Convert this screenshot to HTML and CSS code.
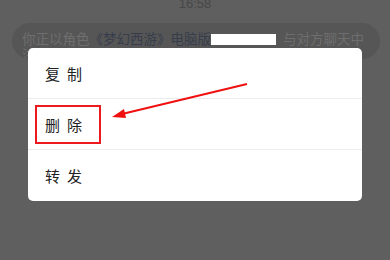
FILE: index.html
```html
<!DOCTYPE html>
<html lang="zh">
<head>
<meta charset="utf-8">
<link rel="stylesheet" href="styles.css">
</head>
<body>
<div class="screen">
  <div class="time">16:58</div>
  <div class="bubble">
    <span class="muted">你正以角色</span><span class="link">《梦幻西游》电脑版</span><span class="mask"></span><span class="muted">与对方聊天中</span><br>
    <span class="muted">注意保护个人隐私</span>
  </div>

  <div class="menu">
    <div class="item">复制</div>
    <div class="item">删除</div>
    <div class="item last">转发</div>
  </div>

  <div class="highlight"></div>
  <svg class="arrow" width="390" height="260" viewBox="0 0 390 260">
    <line x1="247" y1="84" x2="122" y2="114" stroke="#f01010" stroke-width="2"/>
    <polygon points="112,117 124,109 126,118" fill="#f01010"/>
  </svg>
</div>
</body>
</html>
```

FILE: styles.css
```css
* { box-sizing: border-box; }
html, body { margin: 0; padding: 0; }
body {
  background: #5f5f5f;
  font-family: "Noto Sans CJK SC", "Noto Sans", sans-serif;
  width: 390px;
  height: 260px;
  overflow: hidden;
}
.screen {
  position: relative;
  width: 390px;
  height: 260px;
  display: flex;
  flex-direction: column;
  align-items: flex-start;
}
.time {
  align-self: center;
  font-family: "Liberation Sans", Arial, sans-serif;
  font-size: 13px;
  line-height: 13px;
  margin-top: -3px;
  color: #474747;
}
.bubble {
  margin: 13px 0 0 12px;
  width: 368px;
  height: 36px;
  border-radius: 18px;
  background: #565656;
  padding: 7px 0 0 10px;
  font-size: 13.5px;
  line-height: 16px;
  white-space: nowrap;
  overflow: hidden;
}
.muted { color: #6e6e6e; }
.link { color: #363d4c; }
.mask {
  display: inline-block;
  width: 65px;
  height: 11px;
  margin-right: 7px;
  background: #ffffff;
  vertical-align: -1px;
}
.menu {
  position: absolute;
  left: 28px;
  top: 48px;
  width: 334px;
  background: #ffffff;
  border-radius: 5px;
  display: flex;
  flex-direction: column;
}
.item {
  height: 51px;
  display: flex;
  align-items: center;
  padding-left: 17px;
  font-size: 15px;
  letter-spacing: 7px;
  color: #222222;
  border-bottom: 1px solid #ececec;
}
.item.last {
  border-bottom: none;
  height: 51px;
}
.highlight {
  position: absolute;
  left: 35px;
  top: 105px;
  width: 66px;
  height: 39px;
  border: 2px solid #ec1a1f;
}
.arrow {
  position: absolute;
  left: 0;
  top: 0;
}
```
